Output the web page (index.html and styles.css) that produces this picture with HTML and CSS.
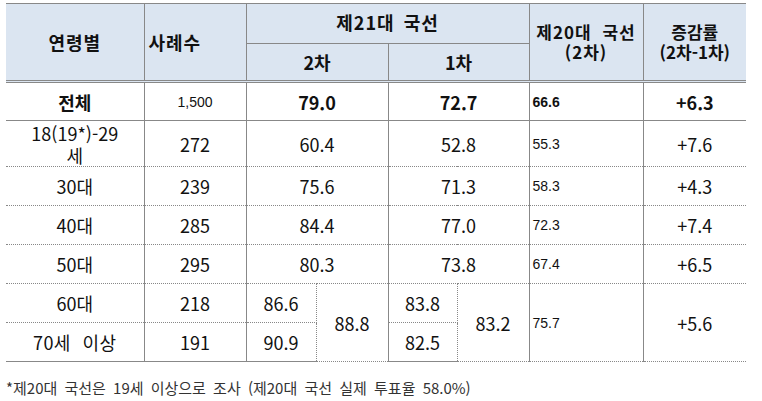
FILE: index.html
```html
<!DOCTYPE html>
<html lang="ko">
<head>
<meta charset="utf-8">
<link rel="stylesheet" href="styles.css">
</head>
<body>
<div class="page">
<table class="survey">
<colgroup>
<col class="c-age"><col class="c-n"><col class="c-a"><col class="c-b"><col class="c-c"><col class="c-d"><col class="c-e"><col class="c-f">
</colgroup>
<thead>
<tr class="h1">
<th rowspan="2" class="big">연령별</th>
<th rowspan="2" class="big left">사례수</th>
<th colspan="4" class="top-title">제21대 국선</th>
<th rowspan="2" class="two wide">제20대 국선<br>(2차)</th>
<th rowspan="2" class="two">증감률<br>(2차-1차)</th>
</tr>
<tr class="h2">
<th colspan="2" class="mid">2차</th>
<th colspan="2" class="mid">1차</th>
</tr>
</thead>
<tbody>
<tr class="r total">
<td class="b">전체</td>
<td class="small">1,500</td>
<td colspan="2" class="b">79.0</td>
<td colspan="2" class="b">72.7</td>
<td class="small b lft">66.6</td>
<td class="b">+6.3</td>
</tr>
<tr class="r tall">
<td class="wrap">18(19*)-29<br>세</td>
<td>272</td>
<td colspan="2">60.4</td>
<td colspan="2">52.8</td>
<td class="small lft">55.3</td>
<td>+7.6</td>
</tr>
<tr class="r">
<td>30대</td>
<td>239</td>
<td colspan="2">75.6</td>
<td colspan="2">71.3</td>
<td class="small lft">58.3</td>
<td>+4.3</td>
</tr>
<tr class="r">
<td>40대</td>
<td>285</td>
<td colspan="2">84.4</td>
<td colspan="2">77.0</td>
<td class="small lft">72.3</td>
<td>+7.4</td>
</tr>
<tr class="r">
<td>50대</td>
<td>295</td>
<td colspan="2">80.3</td>
<td colspan="2">73.8</td>
<td class="small lft">67.4</td>
<td>+6.5</td>
</tr>
<tr class="r">
<td>60대</td>
<td>218</td>
<td class="sub">86.6</td>
<td rowspan="2" class="merge">88.8</td>
<td class="sub">83.8</td>
<td rowspan="2" class="merge">83.2</td>
<td rowspan="2" class="small lft">75.7</td>
<td rowspan="2">+5.6</td>
</tr>
<tr class="r last">
<td class="spaced">70세 이상</td>
<td>191</td>
<td class="sub">90.9</td>
<td class="sub">82.5</td>
</tr>
</tbody>
</table>
<p class="note">*제20대 국선은 19세 이상으로 조사 (제20대 국선 실제 투표율 58.0%)</p>
</div>
</body>
</html>
```
FILE: styles.css
```css
html, body {
  margin: 0;
  padding: 0;
  background: #ffffff;
}
.page {
  padding: 3px 0 0 6px;
  font-family: "Noto Sans CJK KR", "Noto Sans", sans-serif;
  color: #111;
}
.survey {
  border-collapse: collapse;
  table-layout: fixed;
  width: 740px;
}
.c-age { width: 138px; }
.c-n { width: 102px; }
.c-a { width: 70px; }
.c-b { width: 72px; }
.c-c { width: 69px; }
.c-d { width: 72px; }
.c-e { width: 114px; }
.c-f { width: 103px; }

.survey th,
.survey td {
  padding: 0 2px;
  text-align: center;
  vertical-align: middle;
  border-left: 1px solid #888;
  border-right: 1px solid #888;
  font-size: 18px;
  line-height: 22px;
  white-space: nowrap;
}
.survey th:first-child,
.survey tr.r td:first-child {
  border-left: none;
}
.survey th {
  background: #dbe5f1;
  font-weight: 700;
  font-size: 17px;
  color: #111;
}
.survey th.big {
  font-size: 18px;
  letter-spacing: 1px;
}
.survey th.mid {
  font-size: 18px;
}
.survey thead tr.h1 th {
  border-top: 1px solid #888;
}
.survey thead tr.h1 th:last-child {
  border-right: none;
}
.survey tr.h1 { height: 40px; }
.survey tr.h2 { height: 38px; }
.survey th.top-title {
  border-bottom: 1px solid #888;
  vertical-align: top;
  padding-top: 7px;
  font-size: 18px;
  letter-spacing: 1px;
  word-spacing: 3px;
}
.survey th.left {
  text-align: left;
  padding-left: 4px;
}
.survey th.two {
  line-height: 20px;
}
.survey th.wide {
  letter-spacing: 1px;
  word-spacing: 5px;
  padding: 0;
}
.survey thead tr.h2 th {
  border-bottom: 3px double #888;
}
.survey thead tr.h1 th[rowspan] {
  border-bottom: 3px double #888;
}

.survey tr.r { height: 39px; }
.survey tr.r.tall { height: 45px; }
.survey tr.r td {
  border-bottom: 1px dotted #888;
}
.survey tr.r td:last-child {
  border-right: none;
}
.survey tr.total td {
  border-bottom: 1px solid #888;
}
.survey tr.last td,
.survey td[rowspan] {
  border-bottom: 1px solid #888;
}
.survey td.b { font-weight: 700; }
.survey td.small {
  font-family: "Liberation Sans", Arial, sans-serif;
  font-size: 14px;
}
.survey td.lft {
  text-align: left;
  padding-left: 3px;
}
.survey td.sub {
  border-right: 1px dotted #888;
}
.survey td.merge {
  border-left: 1px dotted #888;
}
.survey td.wrap {
  line-height: 22px;
  padding-top: 1px;
}
.survey td.spaced {
  letter-spacing: 0.5px;
  word-spacing: 6px;
}
.note {
  margin: 16px 0 0 0;
  font-size: 15px;
  line-height: 20px;
  word-spacing: 3px;
  color: #333;
}
```
